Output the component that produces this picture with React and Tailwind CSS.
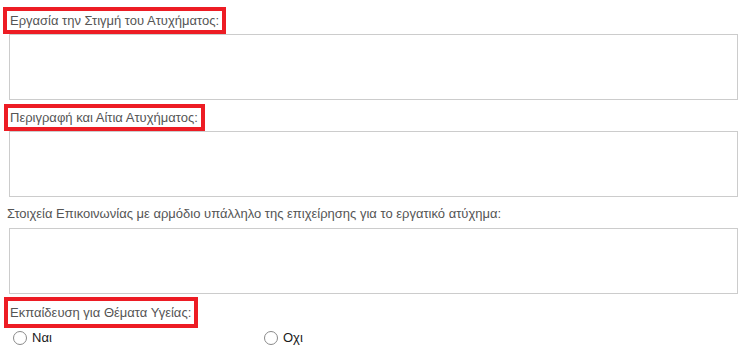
import React from "react";

const font = { fontFamily: '"Liberation Sans", Arial, sans-serif' };

function Radio({ label, className = "" }) {
  return (
    <div className={"flex items-center " + className}>
      <span className="block w-[14px] h-[14px] rounded-full border border-[#8a8a8a] bg-white" />
      <span className="ml-[5px] text-[13px] leading-[16px] text-[#1a1a1a]">{label}</span>
    </div>
  );
}

export default function App() {
  return (
    <div className="w-[745px] h-[351px] bg-white flex flex-col overflow-hidden" style={font}>
      <div className="mt-[7px] ml-[3px] self-start border-4 border-[#ed1c24] pl-[3px] pr-[3px] h-[27px] flex items-center">
        <span className="text-[13px] leading-[18px] text-[#555]">Εργασία την Στιγμή του Ατυχήματος:</span>
      </div>
      <div className="ml-[9px] w-[729px] h-[66px] border border-[#cccccc] bg-white" />

      <div className="mt-[4px] ml-[4px] self-start border-4 border-[#ed1c24] pl-[2px] pr-[3px] h-[27px] flex items-center">
        <span className="text-[13px] leading-[18px] text-[#555]">Περιγραφή και Αίτια Ατυχήματος:</span>
      </div>
      <div className="ml-[9px] w-[729px] h-[66px] border border-[#cccccc] bg-white" />

      <div className="mt-[4px] ml-[7px] h-[26px] flex items-center">
        <span className="text-[13px] leading-[18px] text-[#555]">
          Στοιχεία Επικοινωνίας με αρμόδιο υπάλληλο της επιχείρησης για το εργατικό ατύχημα:
        </span>
      </div>
      <div className="mt-[1px] ml-[9px] w-[729px] h-[66px] border border-[#cccccc] bg-white" />

      <div className="mt-[3px] ml-[4px] self-start border-4 border-[#ed1c24] pl-[2px] pr-[3px] h-[31px] flex items-center">
        <span className="text-[13px] leading-[18px] text-[#555]">Εκπαίδευση για Θέματα Υγείας:</span>
      </div>
      <div className="mt-[2px] flex">
        <Radio label="Ναι" className="ml-[13px] w-[251px]" />
        <Radio label="Οχι" />
      </div>
    </div>
  );
}
